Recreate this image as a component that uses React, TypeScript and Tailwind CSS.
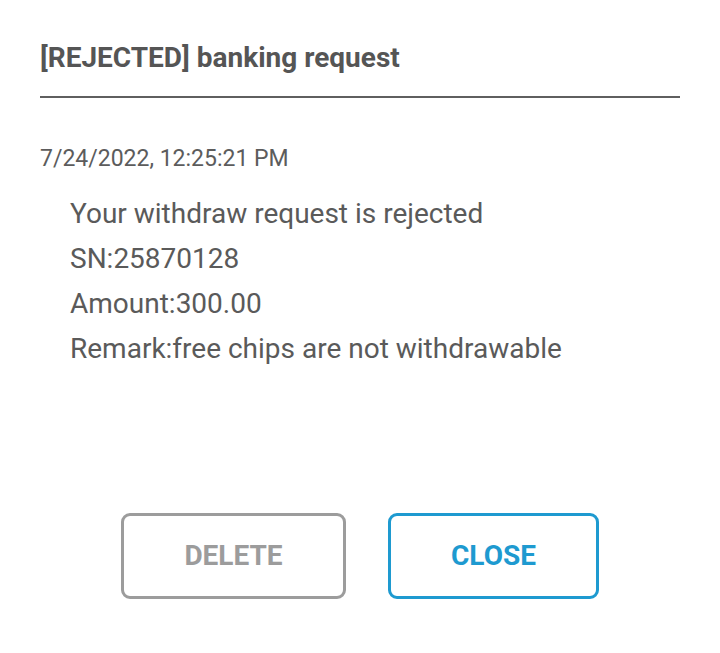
const lines = [
  "Your withdraw request is rejected",
  "SN:25870128",
  "Amount:300.00",
  "Remark:free chips are not withdrawable",
];

const MessageDialog = () => {
  return (
    <div className="w-[720px] h-[653px] bg-white px-10 font-['Roboto',sans-serif]">
      <div className="pt-[42px] pb-[22px] border-b-2 border-[#5f5f5f]">
        <h1 className="text-[28px] leading-[32px] font-bold text-[#555555]">
          [REJECTED] banking request
        </h1>
      </div>
      <div className="mt-[47px] text-[23px] leading-[28px] text-[#5c5c5c]">
        7/24/2022, 12:25:21 PM
      </div>
      <div className="mt-[18px] pl-[30px] text-[28px] leading-[45px] text-[#5a5a5a]">
        {lines.map((line) => (
          <div key={line}>{line}</div>
        ))}
      </div>
      <div className="mt-[142px] flex justify-center gap-[42px]">
        <button className="w-[225px] h-[86px] rounded-[9px] border-[3px] border-[#9c9c9c] text-[28px] font-bold text-[#9c9c9c] cursor-pointer">
          DELETE
        </button>
        <button className="w-[211px] h-[86px] rounded-[9px] border-[3px] border-[#1e9ad0] text-[28px] font-bold text-[#1e9ad0] cursor-pointer">
          CLOSE
        </button>
      </div>
    </div>
  );
};

export default function App() {
  return <MessageDialog />;
}
